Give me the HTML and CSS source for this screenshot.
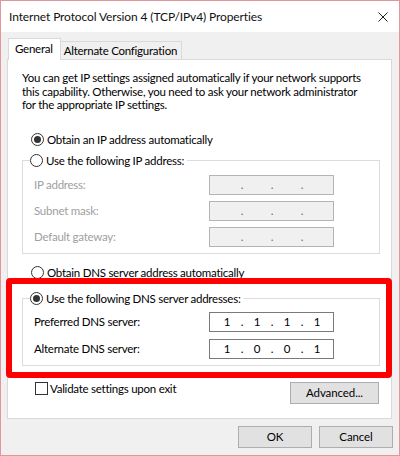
FILE: index.html
```html
<!DOCTYPE html>
<html lang="en">
<head>
<meta charset="utf-8">
<title>Internet Protocol Version 4 (TCP/IPv4) Properties</title>
<link rel="stylesheet" href="styles.css">
</head>
<body>
<div class="window">
  <div class="titlebar">
    <span class="title">Internet Protocol Version 4 (TCP/IPv4) Properties</span>
    <svg class="close" width="10" height="10" viewBox="0 0 10 10"><path d="M0.5 0.5 L9.5 9.5 M9.5 0.5 L0.5 9.5" stroke="#1e1e1e" stroke-width="1" fill="none"/></svg>
  </div>
  <div class="client">
    <div class="tabs">
      <div class="tab active">General</div>
      <div class="tab">Alternate Configuration</div>
    </div>
    <div class="panel">
      <p class="intro">You can get IP settings assigned automatically if your network supports<br>this capability. Otherwise, you need to ask your network administrator<br>for the appropriate IP settings.</p>
      <div class="option first-option"><span class="radio checked"></span><span>Obtain an IP address automatically</span></div>
      <fieldset class="group ip-group">
        <legend class="option legend"><span class="radio"></span><span>Use the following IP address:</span></legend>
        <div class="field-row disabled"><span class="label">IP address:</span><div class="ipbox"><span></span><span class="dot">.</span><span></span><span class="dot">.</span><span></span><span class="dot">.</span><span></span></div></div>
        <div class="field-row disabled"><span class="label">Subnet mask:</span><div class="ipbox"><span></span><span class="dot">.</span><span></span><span class="dot">.</span><span></span><span class="dot">.</span><span></span></div></div>
        <div class="field-row disabled"><span class="label">Default gateway:</span><div class="ipbox"><span></span><span class="dot">.</span><span></span><span class="dot">.</span><span></span><span class="dot">.</span><span></span></div></div>
      </fieldset>
      <div class="option dns-auto"><span class="radio"></span><span>Obtain DNS server address automatically</span></div>
      <fieldset class="group dns-group">
        <legend class="option legend"><span class="radio checked"></span><span>Use the following DNS server addresses:</span></legend>
        <div class="field-row"><span class="label">Preferred DNS server:</span><div class="ipbox"><span>1</span><span class="dot">.</span><span>1</span><span class="dot">.</span><span>1</span><span class="dot">.</span><span>1</span></div></div>
        <div class="field-row"><span class="label">Alternate DNS server:</span><div class="ipbox"><span>1</span><span class="dot">.</span><span>0</span><span class="dot">.</span><span>0</span><span class="dot">.</span><span>1</span></div></div>
      </fieldset>
      <div class="bottom-row">
        <div class="check-row"><span class="checkbox"></span><span>Validate settings upon exit</span></div>
        <button class="btn advanced" type="button">Advanced...</button>
      </div>
      <div class="highlight"></div>
    </div>
    <div class="footer">
      <button class="btn" type="button">OK</button>
      <button class="btn cancel" type="button">Cancel</button>
    </div>
  </div>
</div>
</body>
</html>
```
FILE: styles.css
```css
* { box-sizing: border-box; }
html, body { margin: 0; padding: 0; background: #f0f0f0; }
body {
  font-family: "Lato", "Noto Sans", sans-serif;
  font-size: 11.5px;
  letter-spacing: -0.25px;
  color: #000;
}
.window {
  width: 400px;
  height: 456px;
  border: 1px solid #e3959e;
  display: flex;
  flex-direction: column;
  background: #f0f0f0;
}
.titlebar {
  height: 31px;
  flex: none;
  background: #fff;
  display: flex;
  align-items: center;
  justify-content: space-between;
  padding: 0 11px 0 8px;
}
.title { font-size: 12px; letter-spacing: -0.12px; line-height: 16px; color: #111; }
.close { display: block; margin-top: 1px; }
.client {
  flex: 1;
  padding: 6px 7px 0 6px;
}
.tabs {
  display: flex;
  align-items: flex-end;
  height: 21px;
}
.tab {
  height: 18px;
  line-height: 17px;
  padding: 0 4px 0 3px;
  border: 1px solid #d9d9d9;
  border-bottom: none;
  border-left: none;
  background: #f0f0f0;
}
.tab.active {
  height: 22px;
  line-height: 20px;
  padding: 0 7px 0 6px;
  border-left: 1px solid #d9d9d9;
  background: #fff;
  margin-bottom: -1px;
  position: relative;
  z-index: 1;
  margin-left: 1px;
}
.panel {
  position: relative;
  height: 360px;
  background: #fff;
  border: 1px solid #d9d9d9;
  padding: 11px 11px 0 14px;
}
.intro {
  margin: 0;
  line-height: 13.5px;
  white-space: nowrap;
}
.option {
  display: flex;
  align-items: center;
  height: 16px;
  line-height: 16px;
  white-space: nowrap;
}
.radio {
  width: 13px;
  height: 13px;
  border: 1px solid #333;
  border-radius: 50%;
  background: #fff;
  margin-right: 3px;
  display: flex;
  align-items: center;
  justify-content: center;
  flex: none;
}
.radio.checked::after {
  content: "";
  width: 7px;
  height: 7px;
  border-radius: 50%;
  background: #333;
}
.first-option { margin: 20px 0 0 9px; }
.group {
  margin: 0;
  min-width: 0;
  border: 1px solid #dcdcdc;
  padding: 0 0 6px 0;
}
.legend {
  margin-left: 7px;
  padding: 0 3px 0 0;
}
.ip-group { margin-top: 5px; }
.field-row {
  display: flex;
  align-items: center;
  height: 20px;
  margin-left: 11px;
  margin-top: 6px;
}
.dns-group .field-row { margin-top: 7px; }
.dns-group .field-row:first-of-type { margin-top: 5px; }
.label { width: 175px; flex: none; }
.disabled .label { color: #a0a0a0; }
.ipbox {
  width: 125px;
  height: 20px;
  border: 1px solid #7a7a7a;
  background: #fff;
  display: grid;
  grid-template-columns: 24px 6px 24px 6px 24px 6px 24px;
  padding-left: 5px;
  line-height: 18px;
  text-align: center;
  letter-spacing: 0;
}
.disabled .ipbox {
  background: #f0f0f0;
  border-color: #b4b4b4;
  color: #6d6d6d;
}
.dns-auto { margin: 11px 0 0 9px; }
.dns-group { margin-top: 10px; }
.bottom-row {
  display: flex;
  justify-content: space-between;
  align-items: flex-start;
  margin-top: 16px;
  padding-left: 13px;
}
.check-row {
  display: flex;
  align-items: center;
  height: 14px;
  line-height: 14px;
}
.checkbox {
  width: 13px;
  height: 13px;
  border: 1px solid #333;
  background: #fff;
  margin-right: 2px;
  flex: none;
}
.btn {
  font-family: "Lato", "Noto Sans", sans-serif;
  font-size: 11.5px;
  letter-spacing: -0.1px;
  color: #000;
  background: #e1e1e1;
  border: 1px solid #adadad;
  border-radius: 0;
  height: 22px;
  padding: 0;
  line-height: 18px;
}
.advanced { width: 89px; margin-right: 1px; }
.footer {
  display: flex;
  justify-content: flex-end;
  gap: 7px;
  margin-top: 7px;
  margin-right: -1px;
}
.footer .btn { width: 74px; }
.highlight {
  position: absolute;
  left: -2px;
  top: 218px;
  width: 386px;
  height: 100px;
  border: 6px solid #ff0000;
  border-radius: 4px;
  pointer-events: none;
}
```
